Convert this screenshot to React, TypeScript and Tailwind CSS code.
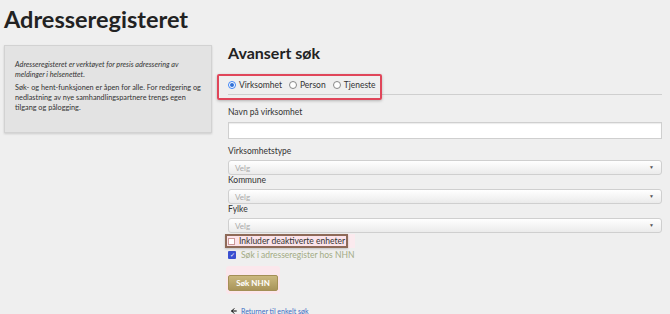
import { ArrowLeft } from "lucide-react";

function SelectField({ label }: { label: string }) {
  return (
    <div className="flex flex-col">
      <label className="text-[8.5px] text-[#333] leading-[10px] mb-[4px]">{label}</label>
      <div className="h-[15px] rounded-[3px] border border-[#cfcfcf] bg-gradient-to-b from-white to-[#ebebeb] flex items-center justify-between pl-[6px] pr-[7px]">
        <span className="text-[8px] text-[#aaa]">Velg</span>
        <span className="text-[5px] text-[#555]">▼</span>
      </div>
    </div>
  );
}

function Radio({ label, checked }: { label: string; checked?: boolean }) {
  return (
    <span className="flex items-center gap-[3px]">
      {checked ? (
        <span className="w-[8px] h-[8px] rounded-full border border-[#3b82f6] flex items-center justify-center bg-white">
          <span className="w-[4px] h-[4px] rounded-full bg-[#2f6fd6]" />
        </span>
      ) : (
        <span className="w-[8px] h-[8px] rounded-full border border-[#888] bg-white" />
      )}
      {label}
    </span>
  );
}

export default function App() {
  return (
    <div
      className="w-[670px] h-[314px] bg-[#efefef] overflow-hidden text-[#222]"
      style={{ fontFamily: "Lato, 'Open Sans', sans-serif" }}
    >
      <h1 className="text-[23.5px] font-bold leading-[30px] pl-[4px] pt-[4px]">Adresseregisteret</h1>

      <div className="flex gap-[16px] pl-[4px] pr-[8px] pt-[11px]">
        <aside className="w-[208px] h-[88px] shrink-0 bg-[#e3e3e3] border border-[#d2d2d2] shadow-[0_1px_2px_rgba(0,0,0,0.15)] pl-[10px] pr-[6px] pt-[14px] text-[7.3px] leading-[10px] text-[#333]">
          <p className="italic pr-[14px] mb-[3px]">
            Adresseregisteret er verktøyet for presis adressering av meldinger i helsenettet.
          </p>
          <p>
            Søk- og hent-funksjonen er åpen for alle. For redigering og nedlastning av nye
            samhandlingspartnere trengs egen tilgang og pålogging.
          </p>
        </aside>

        <main className="flex-1 flex flex-col">
          <h2 className="text-[16px] font-bold leading-[20px] mt-[-2px]">Avansert søk</h2>

          <div className="relative mt-[14px] border-b border-[#cfcfcf] pb-[1px]">
            <div className="absolute left-[-11px] top-[-3px] w-[165px] h-[26px] border-2 border-[#e0465a] rounded-[2px] shadow-[0_1px_3px_rgba(0,0,0,0.25)]" />
            <div className="flex items-center gap-[7px] text-[8.5px] text-[#333] h-[16px]">
              <Radio label="Virksomhet" checked />
              <Radio label="Person" />
              <Radio label="Tjeneste" />
            </div>
          </div>

          <label className="text-[8.5px] text-[#333] leading-[12px] mt-[11px] mb-[4px]">Navn på virksomhet</label>
          <div className="h-[17px] bg-white border border-[#cfcfcf] shadow-[inset_0_1px_1px_rgba(0,0,0,0.08)]" />

          <div className="mt-[7px] flex flex-col">
            <SelectField label="Virksomhetstype" />
            <SelectField label="Kommune" />
            <SelectField label="Fylke" />
          </div>

          <div className="mt-[1px] self-start flex items-center pr-[7px] bg-[#fbeaee]">
            <div className="ml-[-3px] w-[123px] h-[14px] border-2 border-[#8e6a58] bg-[#fbe3ea] flex items-center gap-[4px] pl-[1px] text-[8.5px] text-[#333] shadow-[0_1px_2px_rgba(0,0,0,0.2)]">
              <span className="w-[7px] h-[7px] border border-[#c99] bg-white" />
              Inkluder deaktiverte enheter
            </div>
          </div>

          <div className="mt-[2px] h-[10px] flex items-center gap-[5px] text-[8.5px] text-[#a2ab84]">
            <span className="w-[8px] h-[8px] bg-[#3a4fd0] rounded-[1px] flex items-center justify-center text-white text-[6px] leading-none">
              ✓
            </span>
            Søk i adresseregister hos NHN
          </div>

          <div className="mt-[6px] self-start ml-[-2px] p-[2px] bg-[#fbe7ec] rounded-[3px]">
            <button className="w-[50px] h-[16px] rounded-[2px] bg-gradient-to-b from-[#cbb87e] to-[#a8945a] border border-[#a38f55] text-white text-[8px] font-bold leading-none">
              Søk NHN
            </button>
          </div>

          <div className="mt-[12px] h-[10px] flex items-center gap-[3px] text-[7px]">
            <ArrowLeft size={8} strokeWidth={3} className="text-black ml-[2px]" />
            <a className="text-[#3a6bc4] underline">Returner til enkelt søk</a>
          </div>
        </main>
      </div>
    </div>
  );
}
